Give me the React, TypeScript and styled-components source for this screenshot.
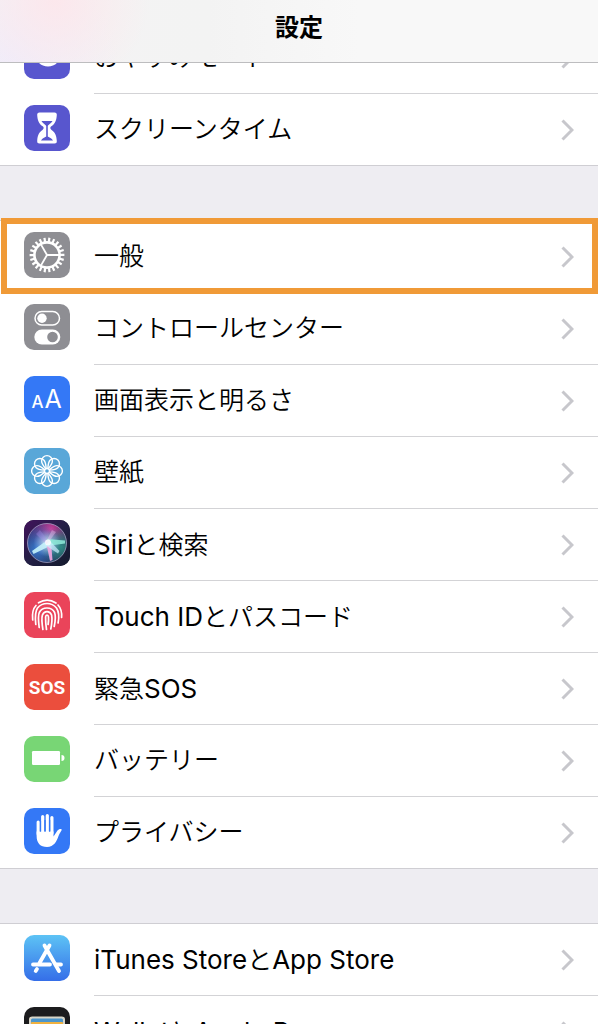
import React from 'react';
import styled, { createGlobalStyle, css } from 'styled-components';

const GlobalStyle = createGlobalStyle`
  * { box-sizing: border-box; }
  body {
    margin: 0;
    background: #eeedf2;
    color: #000;
    font-family: Inter, 'Noto Sans CJK JP', sans-serif;
  }
`;

const Screen = styled.div`
  height: 100vh;
  overflow: hidden;
`;

const Header = styled.header`
  position: fixed;
  top: 0;
  left: 0;
  right: 0;
  z-index: 2;
  padding: 10px 0 16px;
  border-bottom: 1px solid #bdbdbf;
  background:
    radial-gradient(circle at 55px 0, rgba(253, 230, 235, 0.9) 0, rgba(253, 232, 236, 0) 95px),
    radial-gradient(circle at 10px 66px, #efedfb 0, rgba(239, 237, 251, 0) 110px),
    linear-gradient(90deg, #f4f3f4, #f3f3f3 35%, #f8f8f8 60%);
`;

const Title = styled.h1`
  margin: 0;
  font-size: 24px;
  line-height: 36px;
  font-weight: 700;
  text-align: center;
`;

const Content = styled.main`
  display: flex;
  flex-direction: column;
  gap: 54px;
  padding-top: 21px;
`;

const Group = styled.ul`
  margin: 0;
  padding: 0;
  list-style: none;
  background: #fff;
  border-top: 1px solid #cfced3;
  border-bottom: 1px solid #cfced3;
`;

const Item = styled.li<{ $highlighted?: boolean }>`
  position: relative;
  ${({ $highlighted }) =>
    $highlighted &&
    css`
      &::after {
        content: '';
        position: absolute;
        inset: -3px 0 -1px 1px;
        border: 6px solid #f09a37;
        pointer-events: none;
      }
    `}
`;

const RowLink = styled.a`
  display: flex;
  align-items: flex-start;
  gap: 24px;
  padding-left: 24px;
  color: inherit;
  text-decoration: none;
`;

const Body = styled.span`
  flex: 1;
  min-width: 0;
  display: flex;
  align-items: center;
  justify-content: space-between;
  padding-right: 24px;
  border-bottom: 1px solid #d3d3d6;
  li:last-child & {
    border-bottom: 0;
  }
`;

const Label = styled.span`
  height: 71px;
  font-size: 25px;
  line-height: 71px;
  font-weight: 350;
  white-space: nowrap;
`;

const Latin = styled.span`
  font-size: 26px;
  font-weight: 400;
`;

const Tile = styled.svg`
  flex: none;
  width: 46px;
  height: 46px;
  margin-top: 11px;
  border-radius: 10px;
`;

const ChevronSvg = styled.svg`
  flex: none;
  width: 13px;
  height: 22px;
`;

const Chevron = () => (
  <ChevronSvg viewBox="0 0 13 22" aria-hidden="true">
    <path d="M1.500 1.500 11 11 1.500 20.500" fill="none" stroke="#c7c7cc" strokeWidth="3" />
  </ChevronSvg>
);

const IconTile = ({ color, children }: { color: string; children?: React.ReactNode }) => (
  <Tile viewBox="0 0 46 46" aria-hidden="true">
    <rect width="46" height="46" fill={color} />
    {children}
  </Tile>
);

const range = (n: number) => Array.from({ length: n }, (_, i) => i);

const MoonIcon = () => (
  <IconTile color="#5856ce">
    <circle cx="24" cy="20.500" r="13" fill="#fff" />
  </IconTile>
);

const HourglassIcon = () => (
  <IconTile color="#5856ce">
    <path
      d="M15.500 7.500h15q2.500 0 2.300 2.500c-.3 6-2 9-5.500 11.300-1.300.9-1.300 2.500 0 3.400 3.500 2.300 5.200 5.300 5.500 11.300q.2 2.500-2.300 2.500h-15q-2.500 0-2.300-2.500c.3-6 2-9 5.500-11.300 1.300-.9 1.300-2.500 0-3.400-3.500-2.300-5.200-5.300-5.500-11.300q-.2-2.500 2.300-2.500z"
      fill="#fff"
    />
    <path
      d="M17.500 16h11c-1 2.400-4.300 3.500-4.700 5v10.500c1.500 1 4 1.500 5.200 4h-12c1.200-2.500 3.700-3 5.200-4V21c-.4-1.500-3.700-2.600-4.700-5z"
      fill="#5856ce"
    />
  </IconTile>
);

const GearIcon = () => (
  <IconTile color="#8e8e93">
    <g stroke="#fff" fill="none">
      {range(22).map((i) => (
        <path
          key={i}
          d="M23 10.500V5.600"
          strokeWidth="2.200"
          transform={`rotate(${(i * 360) / 22 + 8} 23 23)`}
        />
      ))}
      <circle cx="23" cy="23" r="12.600" strokeWidth="2.600" />
      {[90, 210, 330].map((a) => (
        <path key={a} d="M23 23V11" strokeWidth="1.800" transform={`rotate(${a} 23 23)`} />
      ))}
    </g>
  </IconTile>
);

const ControlIcon = () => (
  <IconTile color="#8e8e93">
    <rect x="11" y="7.500" width="24.500" height="13.500" rx="6.750" fill="none" stroke="#fff" strokeWidth="1.500" />
    <circle cx="18" cy="14.200" r="4.700" fill="#fff" />
    <rect x="10.300" y="25.500" width="26" height="15" rx="7.500" fill="#fff" />
    <circle cx="28.500" cy="33" r="5.300" fill="#8e8e93" />
  </IconTile>
);

const DisplayIcon = () => (
  <IconTile color="#3478f6">
    <text x="7.500" y="32" fill="#fff" fontSize="17" fontWeight="500" fontFamily="Inter">A</text>
    <text x="20.500" y="32" fill="#fff" fontSize="25" fontFamily="Inter">A</text>
  </IconTile>
);

const WallpaperIcon = () => (
  <IconTile color="#59a7d8">
    <g fill="none" stroke="#fff" strokeWidth="1.400">
      {range(8).map((i) => (
        <path
          key={i}
          d="M23 22C20.500 19 17.600 16.500 17.600 13a5.400 5.400 0 0 1 10.800 0c0 3.500-2.900 6-5.400 9z"
          transform={`rotate(${i * 45} 23 23)`}
        />
      ))}
      <circle cx="23" cy="23" r="2.500" fill="#59a7d8" />
    </g>
  </IconTile>
);

const SiriIcon = () => (
  <IconTile color="#1d1b38">
    <defs>
      <linearGradient id="siriBase" x1="0" y1="0" x2="1" y2="1">
        <stop offset="0" stopColor="#42125c" />
        <stop offset="0.500" stopColor="#231f45" />
        <stop offset="1" stopColor="#131a2c" />
      </linearGradient>
      <radialGradient id="siriPink" cx="0.600" cy="0.150" r="0.600">
        <stop offset="0" stopColor="#cf3f96" />
        <stop offset="1" stopColor="#a040a8" stopOpacity="0" />
      </radialGradient>
      <radialGradient id="siriBlue" cx="0.250" cy="0.650" r="0.700">
        <stop offset="0" stopColor="#3878cc" />
        <stop offset="1" stopColor="#3b7fd6" stopOpacity="0" />
      </radialGradient>
      <radialGradient id="siriTeal" cx="0.850" cy="0.600" r="0.500">
        <stop offset="0" stopColor="#2f8a84" />
        <stop offset="1" stopColor="#2fa08e" stopOpacity="0" />
      </radialGradient>
      <radialGradient id="siriGlow" cx="0.500" cy="0.500" r="0.350">
        <stop offset="0" stopColor="#fff" />
        <stop offset="0.300" stopColor="#d9f3ff" stopOpacity="0.600" />
        <stop offset="1" stopColor="#a0c8ff" stopOpacity="0" />
      </radialGradient>
    </defs>
    <rect width="46" height="46" fill="url(#siriBase)" />
    <circle cx="23" cy="23" r="19.500" fill="url(#siriPink)" />
    <circle cx="23" cy="23" r="19.500" fill="url(#siriBlue)" />
    <circle cx="23" cy="23" r="19.500" fill="url(#siriTeal)" />
    <circle cx="23" cy="23" r="19.500" fill="url(#siriGlow)" />
    <path d="M25 19 8 31l1.500 3L28 25z" fill="#c5f3fb" opacity="0.900" />
    <path d="m22 22 4 19 2.500-1L27 22z" fill="#f3a6e0" opacity="0.900" />
    <path d="m23 19 18 1.500v3L23 26z" fill="#8fecd9" opacity="0.850" />
    <path d="m21 25 13 8.500 1.500-2.500L26 21z" fill="#c9f1ff" opacity="0.700" />
    <path d="m25 22-9-12-4 4 10 10z" fill="#a58be8" opacity="0.350" />
    <path d="m24 23 8-11-4-2-6 12z" fill="#f0c4f0" opacity="0.400" />
    <circle cx="24" cy="22.500" r="3" fill="#fff" opacity="0.800" />
    <circle cx="23" cy="23" r="19.500" fill="none" stroke="#b9b5d6" strokeOpacity="0.650" />
  </IconTile>
);

const TouchIcon = () => (
  <IconTile color="#ea445a">
    <g fill="none" stroke="#fff" strokeWidth="1.700" strokeLinecap="round">
      <path d="M14.500 10.800c5.500-3.400 12-3.400 17.500.2" />
      <path d="M34 13c2.800 3 4 7.500 3.600 12.500" />
      <path d="M12 13.500c-3.300 3.500-4 8.500-3.300 14.500" />
      <path d="M11.800 32.500c-.6-6-1.300-12 1.700-16.500 5-6 14-6 19 0 2.500 4 2.600 10 1.600 15" />
      <path d="M15.200 35.500c-.6-5-1.500-11.500.1-15 3-6 12.300-6 15.300 0 1.400 4 .6 9.500-.4 14" />
      <path d="M18.900 37.500c-.8-5-1.500-11-.5-14.500 1.800-4.500 7.400-4.500 9.200 0 .8 4 .2 9-.8 14" />
      <path d="M22.500 37.500c-.6-4-1-9-.9-12.500.2-2.500 2.600-2.500 2.900 0 .2 2.500 0 5-.4 7.500" />
    </g>
  </IconTile>
);

const SosIcon = () => (
  <IconTile color="#eb4e3d">
    <text
      x="23"
      y="30"
      fill="#fff"
      fontSize="19"
      fontWeight="700"
      fontFamily="Roboto, sans-serif"
      textAnchor="middle"
    >
      SOS
    </text>
  </IconTile>
);

const BatteryIcon = () => (
  <IconTile color="#78d675">
    <rect x="8" y="15" width="28" height="14" rx="1.200" fill="#fff" />
    <path d="M37.500 19a3 3 0 0 1 0 6z" fill="#fff" />
  </IconTile>
);

const HandIcon = () => (
  <IconTile color="#3478f6">
    <path
      d="M14.200 26V14M18.700 24V8.500M23.300 24V7.500M27.900 25V9.500"
      stroke="#fff"
      strokeWidth="3.200"
      strokeLinecap="round"
      fill="none"
    />
    <path
      d="M12.600 23.500h16.900v5l4-6c1-1.500 4.400-2.300 4.200-.5-.1.800-2.200 3-3.200 6-1.700 5-4.500 11-11.500 11-6.600 0-10.400-3.700-10.400-11.200z"
      fill="#fff"
    />
    <path d="M16.450 13v10.500M21 12v11.500M25.600 12v11.500" stroke="#3478f6" strokeWidth="1.300" />
  </IconTile>
);

const StoreIcon = () => (
  <IconTile color="url(#storeBlue)">
    <defs>
      <linearGradient id="storeBlue" x1="0" y1="0" x2="0" y2="1">
        <stop offset="0" stopColor="#5dc3f5" />
        <stop offset="1" stopColor="#356ee8" />
      </linearGradient>
    </defs>
    <g fill="none" stroke="#fff" strokeWidth="3.800" strokeLinecap="round">
      <path d="M25.500 10.500 15.500 28" />
      <path d="M20.500 10.500 35 36" />
      <path d="M9 29.500h17M32 29.500h5" />
      <path d="m13 34-1.300 2" />
    </g>
  </IconTile>
);

const WalletIcon = () => (
  <IconTile color="#1c1c1e">
    <rect x="5" y="9.500" width="36" height="32" rx="3" fill="#d8d5c8" />
    <rect x="7" y="11.500" width="32" height="8" rx="1.500" fill="#4c96cc" />
    <rect x="7" y="15" width="32" height="8" rx="1" fill="#f0b13f" />
    <rect x="7" y="20" width="32" height="8" fill="#6bb558" />
  </IconTile>
);

type Entry = { label: string; icon: React.FC; highlighted?: boolean };

const groups: Entry[][] = [
  [
    { label: 'おやすみモード', icon: MoonIcon },
    { label: 'スクリーンタイム', icon: HourglassIcon },
  ],
  [
    { label: '一般', icon: GearIcon, highlighted: true },
    { label: 'コントロールセンター', icon: ControlIcon },
    { label: '画面表示と明るさ', icon: DisplayIcon },
    { label: '壁紙', icon: WallpaperIcon },
    { label: 'Siriと検索', icon: SiriIcon },
    { label: 'Touch IDとパスコード', icon: TouchIcon },
    { label: '緊急SOS', icon: SosIcon },
    { label: 'バッテリー', icon: BatteryIcon },
    { label: 'プライバシー', icon: HandIcon },
  ],
  [
    { label: 'iTunes StoreとApp Store', icon: StoreIcon },
    { label: 'WalletとApple Pay', icon: WalletIcon },
  ],
];

/* Latin words are set one size up so that they balance the kana and kanji. */
const renderLabel = (label: string) =>
  label
    .split(/([A-Za-z ]+)/)
    .filter(Boolean)
    .map((part, i) => (/^[A-Za-z ]/.test(part) ? <Latin key={i}>{part}</Latin> : part));

export default function App() {
  return (
    <Screen lang="ja">
      <GlobalStyle />
      <Header>
        <Title>設定</Title>
      </Header>
      <Content>
        {groups.map((entries) => (
          <Group key={entries[0].label}>
            {entries.map(({ label, icon: Icon, highlighted }) => (
              <Item key={label} $highlighted={highlighted}>
                <RowLink href="#">
                  <Icon />
                  <Body>
                    <Label>{renderLabel(label)}</Label>
                    <Chevron />
                  </Body>
                </RowLink>
              </Item>
            ))}
          </Group>
        ))}
      </Content>
    </Screen>
  );
}
